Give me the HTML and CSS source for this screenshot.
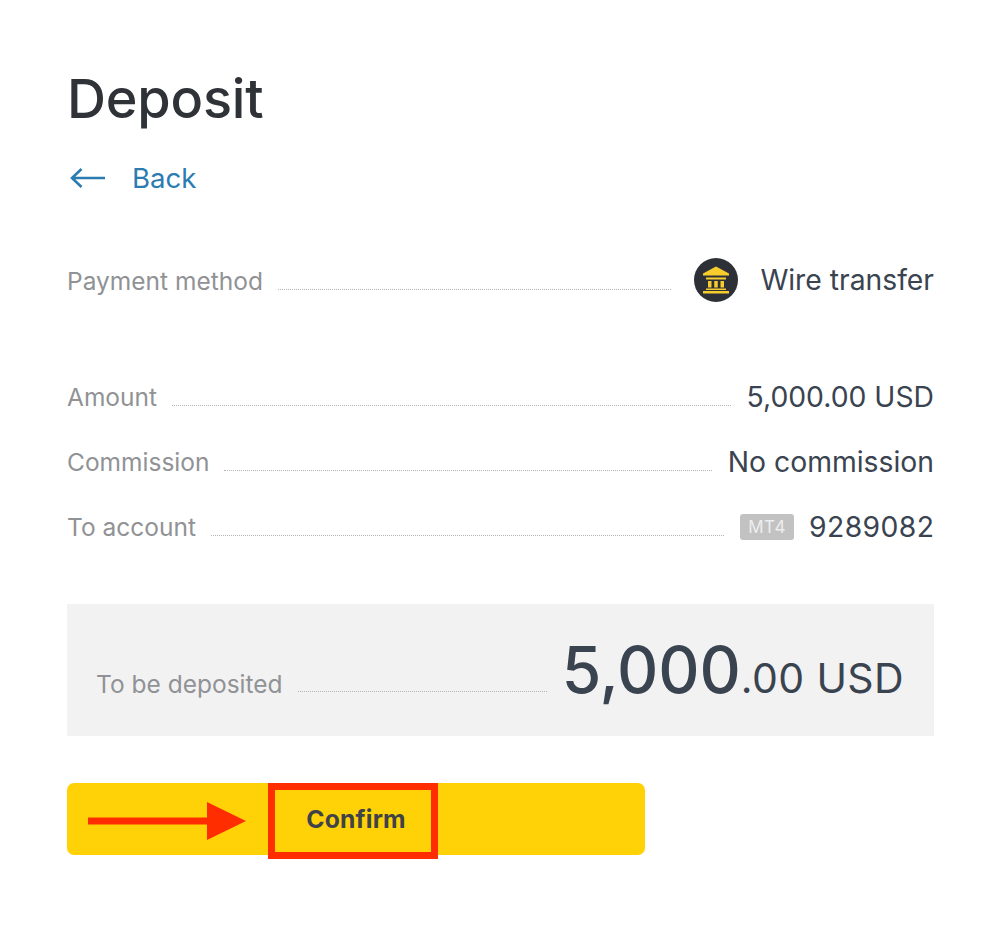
FILE: index.html
```html
<!DOCTYPE html>
<html lang="en">
<head>
<meta charset="utf-8">
<title>Deposit</title>
<link rel="stylesheet" href="styles.css">
</head>
<body>
<main class="page">
  <h1 class="title">Deposit</h1>
  <a class="back" href="#">
    <svg class="back-icon" viewBox="0 0 36 24" width="36" height="24" aria-hidden="true"><path d="M35 12H2M11.500 3 2 12l9.500 9" fill="none" stroke="#2b7cb0" stroke-width="2.600"/></svg>
    <span>Back</span>
  </a>
  <div class="row row-method">
    <span class="label">Payment method</span><span class="dots"></span>
    <span class="value method">
      <svg class="bank" viewBox="0 0 44 44" width="44" height="44" aria-hidden="true">
        <circle cx="22" cy="22" r="22" fill="#2d3036"/>
        <path d="M22 8.500 35 15.500v2H9v-2z" fill="#f7cd2e"/>
        <path d="M12 19.500h20v2H12zM14 23h3.500v6.500H14zM20.250 23h3.500v6.500h-3.500zM26.500 23H30v6.500h-3.500zM12 30.500h20V32H12zM9 33h26v2.500H9z" fill="#f7cd2e"/>
      </svg>
      Wire transfer
    </span>
  </div>
  <div class="row row-amount">
    <span class="label">Amount</span><span class="dots"></span>
    <span class="value">5,000.00 USD</span>
  </div>
  <div class="row">
    <span class="label">Commission</span><span class="dots"></span>
    <span class="value">No commission</span>
  </div>
  <div class="row">
    <span class="label">To account</span><span class="dots"></span>
    <span class="value account"><span class="badge">MT4</span><span class="account-no">9289082</span></span>
  </div>
  <section class="total">
    <span class="label total-label">To be deposited</span><span class="dots total-dots"></span>
    <span class="sum"><span class="sum-big">5,000</span>.00 USD</span>
  </section>
  <div class="action">
    <button class="confirm" type="button">Confirm</button>
    <svg class="arrow" viewBox="0 0 158 38" width="158" height="38" aria-hidden="true"><path d="M0 15.500h119V0l39 19-39 19V22.500H0z" fill="#ff2d00"/></svg>
    <span class="highlight"></span>
  </div>
</main>
</body>
</html>
```
FILE: styles.css
```css
* { box-sizing: border-box; }
html, body { margin: 0; background: #fff; }
body { font-family: Inter, "Liberation Sans", sans-serif; color: #3a4350; }
.page { width: 998px; height: 946px; padding: 69px 64px 0 67px; overflow: hidden; }
.title { margin: 0; font-size: 54px; line-height: 60px; font-weight: 500; color: #2f3338; letter-spacing: -0.2px; }
.back { display: flex; align-items: center; gap: 26px; margin: 34px 0 0 3px; height: 30px; font-size: 27.600px; color: #2b7cb0; text-decoration: none; }
.back-icon { flex: none; }
.row { display: flex; align-items: flex-end; height: 32px; margin-top: 33px; }
.row-method { height: 44px; margin-top: 65px; }
.row-amount { margin-top: 79px; }
.label { flex: none; font-size: 24.500px; line-height: 32px; color: #909295; }
.row-method .label { line-height: 34px; margin-bottom: 4px; }
.dots { flex: 1; min-width: 0; margin: 0 15px 7px; border-bottom: 1px dotted #b4b4b4; }
.row-method .dots { margin: 0 22px 12px 15px; }
.value { flex: none; margin-left: 1px; font-size: 28.300px; line-height: 32px; color: #3a4350; }
.method { display: flex; align-items: center; gap: 22px; height: 44px; }
.bank { flex: none; }
.account { display: flex; align-items: center; gap: 15px; }
.account-no { letter-spacing: 0.4px; margin-right: -0.4px; }
.badge { font-size: 17px; line-height: 26px; height: 26px; padding: 0 8px; border-radius: 3px; background: #c2c2c2; color: #eeeeee; letter-spacing: 0.6px; }
.total { display: flex; align-items: flex-end; height: 132px; margin-top: 61px; padding: 0 30px 35px 29px; background: #f2f2f3; }
.total-label { margin-bottom: 1px; }
.total-dots { flex: 1; margin: 0 15px 9px; }
.sum { flex: none; font-size: 41px; line-height: 46px; color: #3a4350; letter-spacing: 0.4px; }
.sum-big { font-size: 64px; font-weight: 500; letter-spacing: -0.1px; }
.action { position: relative; margin-top: 47px; width: 578px; height: 72px; }
.confirm { display: block; width: 100%; height: 100%; padding: 0 0 1px 0; border: 0; border-radius: 7px; background: #ffd207; font: 700 24.700px Inter, "Liberation Sans", sans-serif; color: #3f4347; letter-spacing: 0.2px; }
.arrow { position: absolute; left: 21px; top: 19px; }
.highlight { position: absolute; left: 201px; top: 0; width: 170px; height: 76px; border: 7px solid #ff2d00; }
```
